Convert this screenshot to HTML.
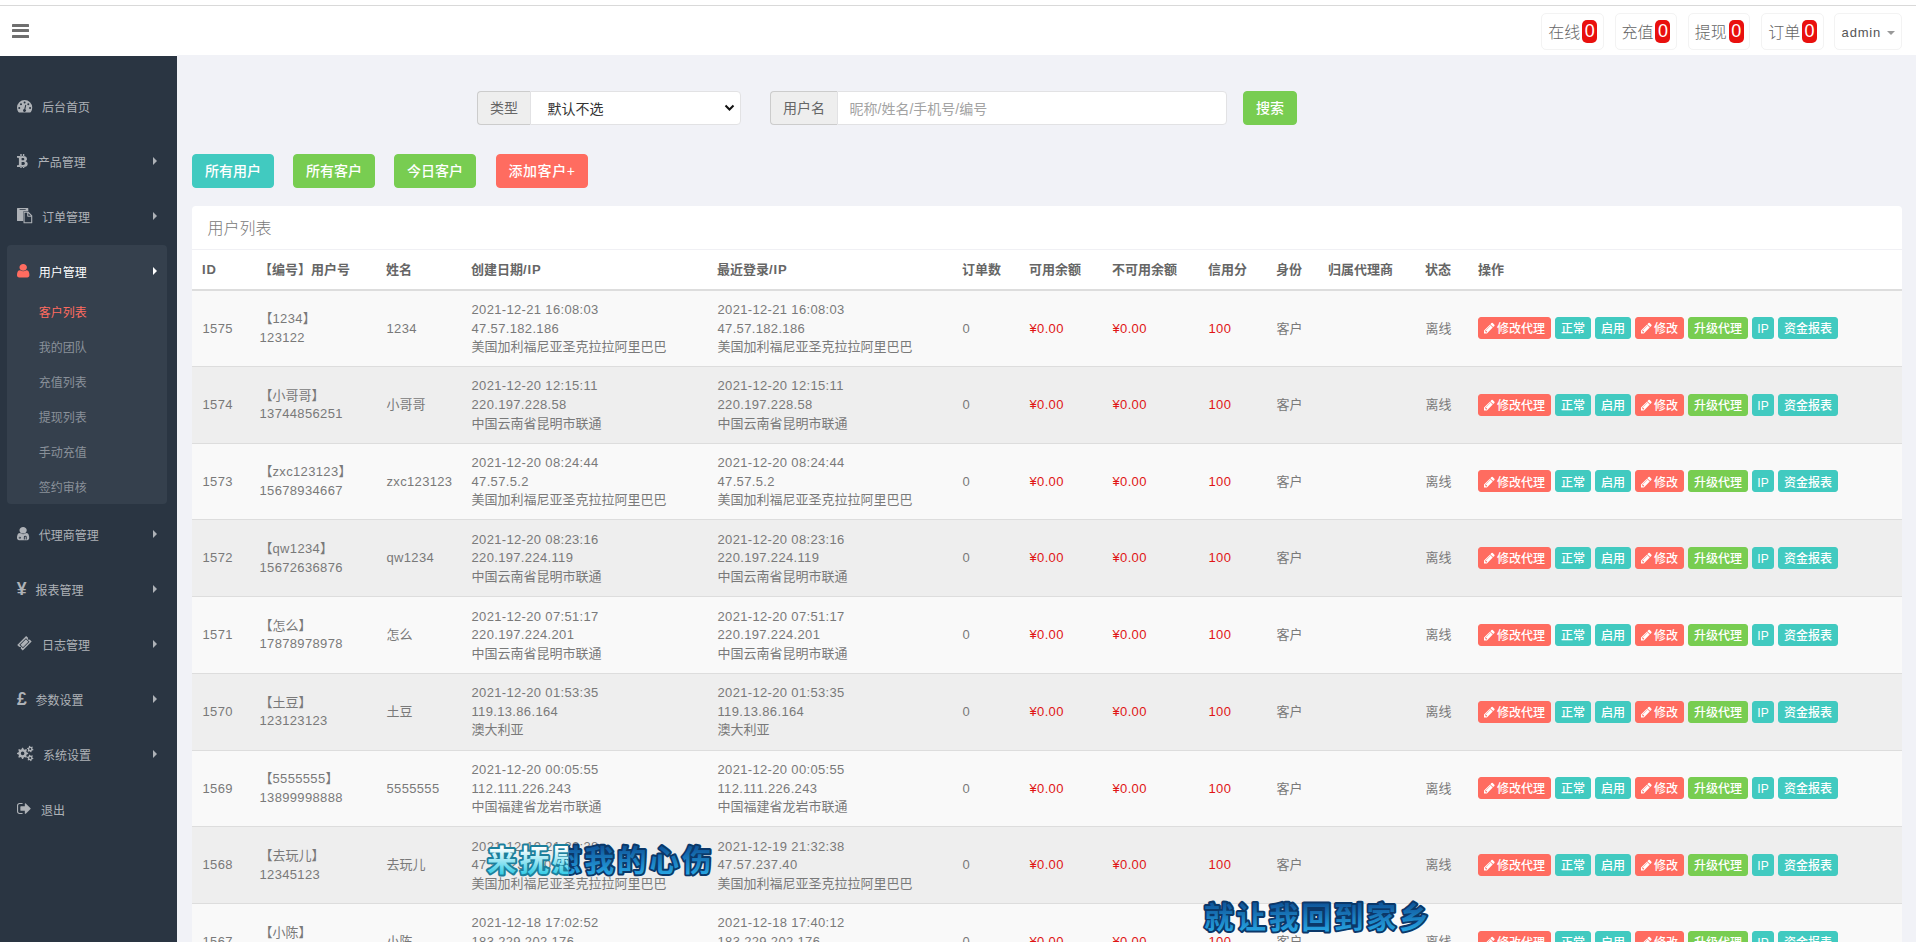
<!DOCTYPE html>
<html lang="zh-CN">
<head>
<meta charset="utf-8">
<title>用户列表</title>
<style>
*{box-sizing:border-box;margin:0;padding:0}
html,body{width:1916px;height:942px;overflow:hidden}
body{font-family:"Liberation Sans","Noto Sans CJK SC",sans-serif;font-size:13px;line-height:1.42857;color:#797979;background:#f1f2f7;position:relative}
ul{list-style:none}
a{text-decoration:none;color:inherit;cursor:pointer}
.topline{position:absolute;left:0;top:0;width:1916px;height:6px;background:#fff;border-bottom:1px solid #d9d9d9}
.header{position:absolute;left:0;top:6px;width:1916px;height:49px;background:#fff}
.burger{position:absolute;left:12px;top:18.3px;width:17.2px;height:15px}
.burger i{display:block;height:2.6px;background:#6f6f6f;margin-bottom:2.5px;border-radius:.6px}
.burger i+i+i{margin-top:3.3px}
.topnav{position:absolute;left:1541.3px;top:7px;display:flex}
.topnav li{margin-right:10.9px;width:62.4px}
.topnav li a{display:flex;align-items:center;height:36.6px;border:1px solid #f3f3f3;border-radius:5px;padding:0 0 0 6px;font-size:16px;color:#666;background:#fff}
.topnav li a .t{font-weight:300;position:relative;top:2.2px;display:inline-block;width:32px}
.bdg{display:inline-block;background:#e9100e;color:#fff;border-radius:5px;font-size:18px;line-height:22.5px;height:22.5px;width:15.1px;text-align:center;margin-left:1.8px;position:relative;top:.4px;font-family:"Liberation Sans",sans-serif}
.topnav li.adm{width:67.6px;margin-right:0}
.topnav li.adm a{font-size:13px;color:#555;padding:0 0 0 6.2px;letter-spacing:.8px}
.username{position:relative;top:2px}
.caret{display:inline-block;width:0;height:0;border-top:4.2px solid #999;border-left:4.2px solid transparent;border-right:4.2px solid transparent;margin-left:6px;margin-top:3.5px}
.sidebar{position:absolute;left:0;top:55px;border-top:1px solid #fff;width:177px;height:887px;background:#2a3542;color:#aeb2b7;font-size:12px}
.menu{padding-top:26.4px}
.menu.m2{padding-top:6px}
.activebox .menu{padding-top:0}
.menu li{height:47.14px;margin:0 10px 7.86px 7px}
.menu li a{display:flex;align-items:center;height:47.14px;padding-left:10px;position:relative;color:#aeb2b7}
.ico{display:inline-block;position:relative;height:15px;margin-right:10px;flex:none}
.ico svg{position:absolute;display:block;overflow:visible}
.lbl{display:inline-block;position:relative;top:2.6px}
.arrow{position:absolute;right:10px;top:19.8px;width:0;height:0;border-left:4px solid #aeb2b7;border-top:4px solid transparent;border-bottom:4px solid transparent}
.arrow.w{border-left-color:#fff}
.activebox{margin:-1.9px 10.4px 0 6.6px;padding-top:1.9px;background:#35404d;border-radius:4px;height:259px}
.activebox .menu li{margin:0}
.activebox .menu li a{color:#fff;padding-left:10.4px}
.sub li{height:35px;line-height:35px;padding-left:32.2px;color:#8a919a;position:relative;top:1.7px}
.sub li.on{color:#ff6c60}
.main{position:absolute;left:177px;top:56px;width:1739px;height:886px}
.search{position:absolute;left:300px;top:35px;height:34px;display:flex}
.ig{display:flex;height:34px}
.addon{display:flex;align-items:center;padding:0 12px;background:#eee;border:1px solid #ccc;border-right:0;border-radius:4px 0 0 4px;color:#666;font-size:14px}
.addon span,.sel span,.inp span{position:relative;top:1.2px}
.ig1{width:263.5px}
.ig2{width:457.4px;margin-left:29.5px}
.sel{flex:1;display:flex;align-items:center;padding-left:16.4px;color:#333;font-size:14px;position:relative;background:#fff;border:1px solid #e2e2e4;border-radius:0 4px 4px 0}
.sel span{top:1.8px}
.chev{position:absolute;right:4.6px;top:11.6px}
.inp{flex:1;display:flex;align-items:center;padding-left:11.6px;color:#a3a3a3;font-size:14px;background:#fff;border:1px solid #e2e2e4;border-radius:0 4px 4px 0}
.inp span{top:1.6px}
.btn{font-weight:500;display:inline-block;height:34px;line-height:32px;padding:0 12px;font-size:14px;color:#fff;border-radius:4px;border:1px solid transparent}
.btn.info,.xs.info{background:#41cac0;border-color:#41cac0}
.btn.success,.xs.success{background:#78cd51;border-color:#78cd51}
.btn.danger,.xs.danger{background:#ff6c60;border-color:#ff6c60}
.sbtn{margin-left:15.6px}
.btnrow{position:absolute;left:15px;top:98px;height:34px;white-space:nowrap}
.btnrow .btn{position:absolute;top:0;width:82px;text-align:center;padding:0}
.btnrow .b1{left:0}.btnrow .b2{left:101px}.btnrow .b3{left:202px}.btnrow .b4{left:304px;width:92px;letter-spacing:.6px}
.panel{position:absolute;left:15px;top:150px;width:1710px;background:#fff;border-radius:4px}
.phead{font-weight:300;height:44px;padding:12px 15px 8px 15.5px;font-size:16px;color:#797979;border-bottom:1px solid #f0f0f4;line-height:22.86px}
.tbl{width:1710px;border-collapse:separate;border-spacing:0;table-layout:fixed}
.tbl th{text-align:left;height:41px;padding:10.3px 10px 8.7px;font-weight:bold;color:#666;border-bottom:2px solid #ddd;vertical-align:middle;white-space:nowrap;line-height:18.57px}
.tbl td{height:76.714px;padding:10.4px 10px 9.6px 10.5px;border-top:1px solid #ddd;vertical-align:middle;color:#797979;white-space:nowrap;line-height:18.571px}
.tbl tbody tr:first-child td{border-top:0;height:75px;padding-top:9.7px;padding-bottom:8.6px}
.tbl tbody tr:first-child .xs{top:-1px}
.tbl tbody tr:nth-child(odd) td{background:#f9f9f9}
.tbl tbody tr:nth-child(even) td{background:#eee}
.tbl td.red{color:#e01515}
.n{letter-spacing:.34px}
.tbl th .n{letter-spacing:.9px}
.bk{margin-left:0}
.xs{font-weight:500;display:inline-block;position:relative;top:-.5px;height:22px;line-height:18px;padding:2.1px 5px 0;word-spacing:0;font-size:12px;color:#fff;border-radius:3px;border:1px solid transparent;vertical-align:middle}
.xs svg{display:inline-block;vertical-align:-1px;margin-right:2px}
.tbl td.ops{font-size:0;padding-left:10px}
.xs{margin-right:4px;text-align:center;padding-left:0!important;padding-right:0!important}
.w73{width:73px}.w36{width:36px}.w49{width:49px}.w60{width:60px}.w22{width:22px}
.lyric{position:absolute;display:block;overflow:visible}
.tico b{position:absolute;font-family:"Liberation Sans",sans-serif;font-weight:bold;font-size:17.6px;line-height:20px;color:#aeb2b7}

</style>
</head>
<body>
<div class="topline"></div>
<header class="header">
  <div class="burger"><i></i><i></i><i></i></div>
  <ul class="topnav">
    <li><a><span class="t">在线</span><span class="bdg">0</span></a></li>
    <li><a><span class="t">充值</span><span class="bdg">0</span></a></li>
    <li><a><span class="t">提现</span><span class="bdg">0</span></a></li>
    <li><a><span class="t">订单</span><span class="bdg">0</span></a></li>
    <li class="adm"><a><span class="username">admin</span><b class="caret"></b></a></li>
  </ul>
</header>
<aside class="sidebar">
  <ul class="menu">
    <li class=""><a><span class="ico" style="width:15px"><svg style="left:-0.15px;top:1.3px" width="15.25" height="12.4" viewBox="0 0 15.25 12.4" preserveAspectRatio="none" fill="#aeb2b7"><path fill-rule="evenodd" d="M0 7.625A7.625 7.625 0 0 1 15.250 7.625Q15.250 10.300 13.900 12Q13.600 12.400 13.100 12.400H2.150Q1.650 12.400 1.350 12Q0 10.300 0 7.625Z M1.25 8.00a1.0 1.0 0 1 0 2.0 0a1.0 1.0 0 1 0 -2.0 0Z M3.00 4.15a1.0 1.0 0 1 0 2.0 0a1.0 1.0 0 1 0 -2.0 0Z M6.60 2.55a1.0 1.0 0 1 0 2.0 0a1.0 1.0 0 1 0 -2.0 0Z M10.30 4.15a1.0 1.0 0 1 0 2.0 0a1.0 1.0 0 1 0 -2.0 0Z M12.05 8.00a1.0 1.0 0 1 0 2.0 0a1.0 1.0 0 1 0 -2.0 0Z M8.300 4.700L9.250 4.950L8.350 9.150A1.500 1.500 0 1 1 7.300 8.900Z"/></svg></span><span class="lbl">后台首页</span></a></li>
    <li class=""><a><span class="ico" style="width:10.7px"><svg style="left:0px;top:0.6px" width="10.7" height="14" viewBox="0 0 10.7 14" preserveAspectRatio="none" fill="#aeb2b7"><path fill-rule="evenodd" d="M0 2.100H6.300C8.600 2.100 10 3.300 10 5.100C10 6.200 9.400 6.900 8.600 7.300C9.900 7.700 10.700 8.700 10.700 10C10.700 11.900 9.200 12.900 6.900 12.900H0V11.200H1.200C1.700 11.200 1.900 11 1.900 10.500V4.500C1.900 4 1.700 3.800 1.200 3.800H0Z M4.600 4.050V6.350H5.900C6.900 6.350 7.300 5.850 7.300 5.200C7.300 4.550 6.900 4.050 5.900 4.050Z M4.600 8.050V11H6.200C7.400 11 7.900 10.400 7.900 9.525C7.900 8.650 7.400 8.050 6.200 8.050Z M3.300 0H4.700V2.200H3.300Z M5.900 0H7.300V2.200H5.900Z M3.300 12.800H4.700V14H3.300Z M5.900 12.800H7.300V14H5.900Z"/></svg></span><span class="lbl">产品管理</span><span class="arrow"></span></a></li>
    <li class=""><a><span class="ico" style="width:15px"><svg style="left:-0.15px;top:-0.65px" width="15.25" height="15.3" viewBox="0 0 15.25 15.3" preserveAspectRatio="none" fill="#aeb2b7"><path fill-rule="evenodd" d="M0.600 0H10.700Q11.300 0 11.300 0.600V3.300H7.100Q6.100 3.300 6.100 4.300V13H0.600Q0 13 0 12.400V0.600Q0 0 0.600 0Z M2.600 1.150H8.700V1.950H2.600Z M7.100 3.700H11.500L15.250 7.450V14.700Q15.250 15.300 14.650 15.300H7.100Q6.500 15.300 6.500 14.700V4.300Q6.500 3.700 7.100 3.700Z M7.600 4.800V14.200H14.150V8.800H10.900Q10.200 8.800 10.200 8.100V4.800Z M11.300 5.150V7.700H13.850Z"/></svg></span><span class="lbl">订单管理</span><span class="arrow"></span></a></li>
  </ul>
  <div class="activebox">
    <ul class="menu">
      <li class="act"><a><span class="ico" style="width:11.8px"><svg style="left:-0.15px;top:0.55px" width="12.4" height="13.5" viewBox="256 128 1280 1536" preserveAspectRatio="none" fill="#ff6c60"><path d="M1536 1399q0 109-62.500 187t-150.500 78h-854q-88 0-150.500-78t-62.500-187q0-85 8.500-160.500t31.500-152 58.500-131 94-89 134.500-34.500q131 128 313 128t313-128q76 0 134.500 34.500t94 89 58.500 131 31.500 152 8.500 160.500zm-256-887q0 159-112.500 271.500t-271.500 112.500-271.500-112.500-112.500-271.500 112.500-271.500 271.500-112.500 271.500 112.500 112.500 271.500z"/></svg></span><span class="lbl">用户管理</span><span class="arrow w"></span></a></li>
    </ul>
    <ul class="sub">
      <li class="on">客户列表</li>
      <li>我的团队</li>
      <li>充值列表</li>
      <li>提现列表</li>
      <li>手动充值</li>
      <li>签约审核</li>
    </ul>
  </div>
  <ul class="menu m2">
    <li class=""><a><span class="ico" style="width:11.8px"><svg style="left:-0.15px;top:0.4px" width="12.2" height="13.2" viewBox="256 128 1280 1536" preserveAspectRatio="none" fill="#aeb2b7"><path fill-rule="evenodd" d="M1536 1399q0 109-62.500 187t-150.500 78h-854q-88 0-150.500-78t-62.500-187q0-85 8.500-160.500t31.500-152 58.500-131 94-89 134.500-34.500q131 128 313 128t313-128q76 0 134.500 34.500t94 89 58.500 131 31.500 152 8.500 160.500zm-256-887q0 159-112.500 271.500t-271.500 112.500-271.500-112.500-112.500-271.500 112.500-271.500 271.500-112.500 271.500 112.500 112.500 271.500z M438 1373 a120 105 0 1 0 240 0 a120 105 0 1 0 -240 0Z M508 1373 a50 44 0 1 0 100 0 a50 44 0 1 0 -100 0Z M975 1571 V1290 a150 150 0 0 1 300 0 V1571 h-100 V1290 a50 50 0 0 0 -100 0 V1571Z"/></svg></span><span class="lbl">代理商管理</span><span class="arrow"></span></a></li>
    <li class=""><a><span class="ico tico" style="width:8.6px"><b style="left:-0.2px;top:-3px">¥</b></span><span class="lbl">报表管理</span><span class="arrow"></span></a></li>
    <li class=""><a><span class="ico" style="width:15px"><svg style="left:0.2px;top:-0.2px" width="14.9" height="14.5" viewBox="0 0 14.9 14.5" preserveAspectRatio="none" fill="#aeb2b7"><g transform="rotate(-45 7.450 7.250)"><path fill-rule="evenodd" d="M1.150 3.350H13.750V6.250A1 1 0 0 0 13.750 8.250V11.150H1.150V8.250A1 1 0 0 0 1.150 6.250Z M2.750 4.750V9.750H12.150V4.750Z M3.550 5.550H11.350V8.950H3.550Z"/></g></svg></span><span class="lbl">日志管理</span><span class="arrow"></span></a></li>
    <li class=""><a><span class="ico tico" style="width:8.6px"><b style="left:-0.1px;top:-2.9px">£</b></span><span class="lbl">参数设置</span><span class="arrow"></span></a></li>
    <li class=""><a><span class="ico" style="width:16px"><svg style="left:-0.15px;top:-0.4px" width="16.5" height="15" viewBox="0 0 16.5 15" preserveAspectRatio="none" fill="#aeb2b7"><path fill-rule="evenodd" d="M11.18 6.92 L11.18 7.88 L9.63 8.57 L9.28 9.42 L9.89 11.00 L9.20 11.69 L7.62 11.08 L6.77 11.43 L6.08 12.98 L5.12 12.98 L4.43 11.43 L3.58 11.08 L2.00 11.69 L1.31 11.00 L1.92 9.42 L1.57 8.57 L0.02 7.88 L0.02 6.92 L1.57 6.23 L1.92 5.38 L1.31 3.80 L2.00 3.11 L3.58 3.72 L4.43 3.37 L5.12 1.82 L6.08 1.82 L6.77 3.37 L7.62 3.72 L9.20 3.11 L9.89 3.80 L9.28 5.38 L9.63 6.23Z M3.80 7.40a1.8 1.8 0 1 0 3.6 0a1.8 1.8 0 1 0 -3.6 0Z M16.47 3.58 L16.27 4.31 L15.05 4.47 L14.57 4.94 L14.42 6.17 L13.69 6.36 L12.94 5.39 L12.29 5.21 L11.15 5.69 L10.62 5.15 L11.09 4.02 L10.92 3.37 L9.93 2.62 L10.13 1.89 L11.35 1.73 L11.83 1.26 L11.98 0.03 L12.71 -0.16 L13.46 0.81 L14.11 0.99 L15.25 0.51 L15.78 1.05 L15.31 2.18 L15.48 2.83Z M12.20 3.10a1.0 1.0 0 1 0 2.0 0a1.0 1.0 0 1 0 -2.0 0Z M16.47 12.38 L16.27 13.11 L15.05 13.27 L14.57 13.74 L14.42 14.97 L13.69 15.16 L12.94 14.19 L12.29 14.01 L11.15 14.49 L10.62 13.95 L11.09 12.82 L10.92 12.17 L9.93 11.42 L10.13 10.69 L11.35 10.53 L11.83 10.06 L11.98 8.83 L12.71 8.64 L13.46 9.61 L14.11 9.79 L15.25 9.31 L15.78 9.85 L15.31 10.98 L15.48 11.63Z M12.20 11.90a1.0 1.0 0 1 0 2.0 0a1.0 1.0 0 1 0 -2.0 0Z"/></svg></span><span class="lbl">系统设置</span><span class="arrow"></span></a></li>
    <li class=""><a><span class="ico" style="width:13.9px"><svg style="left:-0.15px;top:1.55px" width="13.7" height="11.1" viewBox="64 256 1568 1280" preserveAspectRatio="none" fill="#aeb2b7"><path d="M704 1440q0 4 1 20t.5 26.500-3 23.500-10 19.500-20.500 6.500h-320q-119 0-203.500-84.500t-84.500-203.500v-704q0-119 84.500-203.500t203.500-84.500h320q13 0 22.500 9.500t9.500 22.500q0 4 1 20t.5 26.500-3 23.500-10 19.500-20.500 6.500h-320q-66 0-113 47t-47 113v704q0 66 47 113t113 47h312l11.500 1 11.500 3 8 5.500 7 9 2 13.500zm928-544q0 26-19 45l-544 544q-19 19-45 19t-45-19-19-45v-288h-448q-26 0-45-19t-19-45v-384q0-26 19-45t45-19h448v-288q0-26 19-45t45-19 45 19l544 544q19 19 19 45z"/></svg></span><span class="lbl">退出</span></a></li>
  </ul>
</aside>
<section class="main">
  <div class="search">
    <div class="ig ig1"><span class="addon"><span>类型</span></span><span class="sel"><span>默认不选</span><svg class="chev" width="11" height="8" viewBox="0 0 11 8"><path d="M1.500 1.500 L5.500 5.500 L9.500 1.500" fill="none" stroke="#111" stroke-width="2"/></svg></span></div>
    <div class="ig ig2"><span class="addon"><span>用户名</span></span><span class="inp"><span>昵称/姓名/手机号/编号</span></span></div>
    <a class="btn success sbtn">搜索</a>
  </div>
  <div class="btnrow">
    <a class="btn info b1">所有用户</a><a class="btn success b2">所有客户</a><a class="btn success b3">今日客户</a><a class="btn danger b4">添加客户+</a>
  </div>
  <div class="panel">
    <div class="phead">用户列表</div>
    <table class="tbl">
      <colgroup><col style="width:57px"><col style="width:127px"><col style="width:85px"><col style="width:246px"><col style="width:245px"><col style="width:67px"><col style="width:83px"><col style="width:96px"><col style="width:68px"><col style="width:52px"><col style="width:97px"><col style="width:53px"><col></colgroup>
      <thead><tr><th><span class="n">ID</span></th><th>【编号】用户号</th><th>姓名</th><th>创建日期<span class="n">/IP</span></th><th>最近登录<span class="n">/IP</span></th><th>订单数</th><th>可用余额</th><th>不可用余额</th><th>信用分</th><th>身份</th><th>归属代理商</th><th>状态</th><th>操作</th></tr></thead>
      <tbody>
<tr>
<td><span class="n">1575</span></td>
<td>【<span class="n">1234</span>】<br><span class="n">123122</span></td>
<td><span class="n">1234</span></td>
<td><span class="n">2021-12-21 16:08:03</span><br><span class="n">47.57.182.186</span><br>美国加利福尼亚圣克拉拉阿里巴巴</td>
<td><span class="n">2021-12-21 16:08:03</span><br><span class="n">47.57.182.186</span><br>美国加利福尼亚圣克拉拉阿里巴巴</td>
<td><span class="n">0</span></td>
<td class="red"><span class="n">¥0.00</span></td>
<td class="red"><span class="n">¥0.00</span></td>
<td class="red"><span class="n">100</span></td>
<td>客户</td>
<td></td>
<td>离线</td>
<td class="ops"><a class="xs danger w73"><svg width="10.8" height="12" viewBox="128 128 1536 1536" fill="#fff"><path d="M491 1536l91-91-235-235-91 91v107h128v128h107zm523-928q0-22-22-22-10 0-17 7l-542 542q-7 7-7 17 0 22 22 22 10 0 17-7l542-542q7-7 7-17zm-54-192l416 416-832 832h-416v-416zm683 96q0 53-37 90l-166 166-416-416 166-165q36-38 90-38 53 0 91 38l235 234q37 39 37 91z"/></svg>修改代理</a><a class="xs info w36">正常</a><a class="xs info w36">启用</a><a class="xs danger w49"><svg width="10.8" height="12" viewBox="128 128 1536 1536" fill="#fff"><path d="M491 1536l91-91-235-235-91 91v107h128v128h107zm523-928q0-22-22-22-10 0-17 7l-542 542q-7 7-7 17 0 22 22 22 10 0 17-7l542-542q7-7 7-17zm-54-192l416 416-832 832h-416v-416zm683 96q0 53-37 90l-166 166-416-416 166-165q36-38 90-38 53 0 91 38l235 234q37 39 37 91z"/></svg>修改</a><a class="xs success w60">升级代理</a><a class="xs info w22">IP</a><a class="xs info w60">资金报表</a></td>
</tr>
<tr>
<td><span class="n">1574</span></td>
<td>【小哥哥】<br><span class="n">13744856251</span></td>
<td>小哥哥</td>
<td><span class="n">2021-12-20 12:15:11</span><br><span class="n">220.197.228.58</span><br>中国云南省昆明市联通</td>
<td><span class="n">2021-12-20 12:15:11</span><br><span class="n">220.197.228.58</span><br>中国云南省昆明市联通</td>
<td><span class="n">0</span></td>
<td class="red"><span class="n">¥0.00</span></td>
<td class="red"><span class="n">¥0.00</span></td>
<td class="red"><span class="n">100</span></td>
<td>客户</td>
<td></td>
<td>离线</td>
<td class="ops"><a class="xs danger w73"><svg width="10.8" height="12" viewBox="128 128 1536 1536" fill="#fff"><path d="M491 1536l91-91-235-235-91 91v107h128v128h107zm523-928q0-22-22-22-10 0-17 7l-542 542q-7 7-7 17 0 22 22 22 10 0 17-7l542-542q7-7 7-17zm-54-192l416 416-832 832h-416v-416zm683 96q0 53-37 90l-166 166-416-416 166-165q36-38 90-38 53 0 91 38l235 234q37 39 37 91z"/></svg>修改代理</a><a class="xs info w36">正常</a><a class="xs info w36">启用</a><a class="xs danger w49"><svg width="10.8" height="12" viewBox="128 128 1536 1536" fill="#fff"><path d="M491 1536l91-91-235-235-91 91v107h128v128h107zm523-928q0-22-22-22-10 0-17 7l-542 542q-7 7-7 17 0 22 22 22 10 0 17-7l542-542q7-7 7-17zm-54-192l416 416-832 832h-416v-416zm683 96q0 53-37 90l-166 166-416-416 166-165q36-38 90-38 53 0 91 38l235 234q37 39 37 91z"/></svg>修改</a><a class="xs success w60">升级代理</a><a class="xs info w22">IP</a><a class="xs info w60">资金报表</a></td>
</tr>
<tr>
<td><span class="n">1573</span></td>
<td>【<span class="n">zxc123123</span>】<br><span class="n">15678934667</span></td>
<td><span class="n">zxc123123</span></td>
<td><span class="n">2021-12-20 08:24:44</span><br><span class="n">47.57.5.2</span><br>美国加利福尼亚圣克拉拉阿里巴巴</td>
<td><span class="n">2021-12-20 08:24:44</span><br><span class="n">47.57.5.2</span><br>美国加利福尼亚圣克拉拉阿里巴巴</td>
<td><span class="n">0</span></td>
<td class="red"><span class="n">¥0.00</span></td>
<td class="red"><span class="n">¥0.00</span></td>
<td class="red"><span class="n">100</span></td>
<td>客户</td>
<td></td>
<td>离线</td>
<td class="ops"><a class="xs danger w73"><svg width="10.8" height="12" viewBox="128 128 1536 1536" fill="#fff"><path d="M491 1536l91-91-235-235-91 91v107h128v128h107zm523-928q0-22-22-22-10 0-17 7l-542 542q-7 7-7 17 0 22 22 22 10 0 17-7l542-542q7-7 7-17zm-54-192l416 416-832 832h-416v-416zm683 96q0 53-37 90l-166 166-416-416 166-165q36-38 90-38 53 0 91 38l235 234q37 39 37 91z"/></svg>修改代理</a><a class="xs info w36">正常</a><a class="xs info w36">启用</a><a class="xs danger w49"><svg width="10.8" height="12" viewBox="128 128 1536 1536" fill="#fff"><path d="M491 1536l91-91-235-235-91 91v107h128v128h107zm523-928q0-22-22-22-10 0-17 7l-542 542q-7 7-7 17 0 22 22 22 10 0 17-7l542-542q7-7 7-17zm-54-192l416 416-832 832h-416v-416zm683 96q0 53-37 90l-166 166-416-416 166-165q36-38 90-38 53 0 91 38l235 234q37 39 37 91z"/></svg>修改</a><a class="xs success w60">升级代理</a><a class="xs info w22">IP</a><a class="xs info w60">资金报表</a></td>
</tr>
<tr>
<td><span class="n">1572</span></td>
<td>【<span class="n">qw1234</span>】<br><span class="n">15672636876</span></td>
<td><span class="n">qw1234</span></td>
<td><span class="n">2021-12-20 08:23:16</span><br><span class="n">220.197.224.119</span><br>中国云南省昆明市联通</td>
<td><span class="n">2021-12-20 08:23:16</span><br><span class="n">220.197.224.119</span><br>中国云南省昆明市联通</td>
<td><span class="n">0</span></td>
<td class="red"><span class="n">¥0.00</span></td>
<td class="red"><span class="n">¥0.00</span></td>
<td class="red"><span class="n">100</span></td>
<td>客户</td>
<td></td>
<td>离线</td>
<td class="ops"><a class="xs danger w73"><svg width="10.8" height="12" viewBox="128 128 1536 1536" fill="#fff"><path d="M491 1536l91-91-235-235-91 91v107h128v128h107zm523-928q0-22-22-22-10 0-17 7l-542 542q-7 7-7 17 0 22 22 22 10 0 17-7l542-542q7-7 7-17zm-54-192l416 416-832 832h-416v-416zm683 96q0 53-37 90l-166 166-416-416 166-165q36-38 90-38 53 0 91 38l235 234q37 39 37 91z"/></svg>修改代理</a><a class="xs info w36">正常</a><a class="xs info w36">启用</a><a class="xs danger w49"><svg width="10.8" height="12" viewBox="128 128 1536 1536" fill="#fff"><path d="M491 1536l91-91-235-235-91 91v107h128v128h107zm523-928q0-22-22-22-10 0-17 7l-542 542q-7 7-7 17 0 22 22 22 10 0 17-7l542-542q7-7 7-17zm-54-192l416 416-832 832h-416v-416zm683 96q0 53-37 90l-166 166-416-416 166-165q36-38 90-38 53 0 91 38l235 234q37 39 37 91z"/></svg>修改</a><a class="xs success w60">升级代理</a><a class="xs info w22">IP</a><a class="xs info w60">资金报表</a></td>
</tr>
<tr>
<td><span class="n">1571</span></td>
<td>【怎么】<br><span class="n">17878978978</span></td>
<td>怎么</td>
<td><span class="n">2021-12-20 07:51:17</span><br><span class="n">220.197.224.201</span><br>中国云南省昆明市联通</td>
<td><span class="n">2021-12-20 07:51:17</span><br><span class="n">220.197.224.201</span><br>中国云南省昆明市联通</td>
<td><span class="n">0</span></td>
<td class="red"><span class="n">¥0.00</span></td>
<td class="red"><span class="n">¥0.00</span></td>
<td class="red"><span class="n">100</span></td>
<td>客户</td>
<td></td>
<td>离线</td>
<td class="ops"><a class="xs danger w73"><svg width="10.8" height="12" viewBox="128 128 1536 1536" fill="#fff"><path d="M491 1536l91-91-235-235-91 91v107h128v128h107zm523-928q0-22-22-22-10 0-17 7l-542 542q-7 7-7 17 0 22 22 22 10 0 17-7l542-542q7-7 7-17zm-54-192l416 416-832 832h-416v-416zm683 96q0 53-37 90l-166 166-416-416 166-165q36-38 90-38 53 0 91 38l235 234q37 39 37 91z"/></svg>修改代理</a><a class="xs info w36">正常</a><a class="xs info w36">启用</a><a class="xs danger w49"><svg width="10.8" height="12" viewBox="128 128 1536 1536" fill="#fff"><path d="M491 1536l91-91-235-235-91 91v107h128v128h107zm523-928q0-22-22-22-10 0-17 7l-542 542q-7 7-7 17 0 22 22 22 10 0 17-7l542-542q7-7 7-17zm-54-192l416 416-832 832h-416v-416zm683 96q0 53-37 90l-166 166-416-416 166-165q36-38 90-38 53 0 91 38l235 234q37 39 37 91z"/></svg>修改</a><a class="xs success w60">升级代理</a><a class="xs info w22">IP</a><a class="xs info w60">资金报表</a></td>
</tr>
<tr>
<td><span class="n">1570</span></td>
<td>【土豆】<br><span class="n">123123123</span></td>
<td>土豆</td>
<td><span class="n">2021-12-20 01:53:35</span><br><span class="n">119.13.86.164</span><br>澳大利亚</td>
<td><span class="n">2021-12-20 01:53:35</span><br><span class="n">119.13.86.164</span><br>澳大利亚</td>
<td><span class="n">0</span></td>
<td class="red"><span class="n">¥0.00</span></td>
<td class="red"><span class="n">¥0.00</span></td>
<td class="red"><span class="n">100</span></td>
<td>客户</td>
<td></td>
<td>离线</td>
<td class="ops"><a class="xs danger w73"><svg width="10.8" height="12" viewBox="128 128 1536 1536" fill="#fff"><path d="M491 1536l91-91-235-235-91 91v107h128v128h107zm523-928q0-22-22-22-10 0-17 7l-542 542q-7 7-7 17 0 22 22 22 10 0 17-7l542-542q7-7 7-17zm-54-192l416 416-832 832h-416v-416zm683 96q0 53-37 90l-166 166-416-416 166-165q36-38 90-38 53 0 91 38l235 234q37 39 37 91z"/></svg>修改代理</a><a class="xs info w36">正常</a><a class="xs info w36">启用</a><a class="xs danger w49"><svg width="10.8" height="12" viewBox="128 128 1536 1536" fill="#fff"><path d="M491 1536l91-91-235-235-91 91v107h128v128h107zm523-928q0-22-22-22-10 0-17 7l-542 542q-7 7-7 17 0 22 22 22 10 0 17-7l542-542q7-7 7-17zm-54-192l416 416-832 832h-416v-416zm683 96q0 53-37 90l-166 166-416-416 166-165q36-38 90-38 53 0 91 38l235 234q37 39 37 91z"/></svg>修改</a><a class="xs success w60">升级代理</a><a class="xs info w22">IP</a><a class="xs info w60">资金报表</a></td>
</tr>
<tr>
<td><span class="n">1569</span></td>
<td>【<span class="n">5555555</span>】<br><span class="n">13899998888</span></td>
<td><span class="n">5555555</span></td>
<td><span class="n">2021-12-20 00:05:55</span><br><span class="n">112.111.226.243</span><br>中国福建省龙岩市联通</td>
<td><span class="n">2021-12-20 00:05:55</span><br><span class="n">112.111.226.243</span><br>中国福建省龙岩市联通</td>
<td><span class="n">0</span></td>
<td class="red"><span class="n">¥0.00</span></td>
<td class="red"><span class="n">¥0.00</span></td>
<td class="red"><span class="n">100</span></td>
<td>客户</td>
<td></td>
<td>离线</td>
<td class="ops"><a class="xs danger w73"><svg width="10.8" height="12" viewBox="128 128 1536 1536" fill="#fff"><path d="M491 1536l91-91-235-235-91 91v107h128v128h107zm523-928q0-22-22-22-10 0-17 7l-542 542q-7 7-7 17 0 22 22 22 10 0 17-7l542-542q7-7 7-17zm-54-192l416 416-832 832h-416v-416zm683 96q0 53-37 90l-166 166-416-416 166-165q36-38 90-38 53 0 91 38l235 234q37 39 37 91z"/></svg>修改代理</a><a class="xs info w36">正常</a><a class="xs info w36">启用</a><a class="xs danger w49"><svg width="10.8" height="12" viewBox="128 128 1536 1536" fill="#fff"><path d="M491 1536l91-91-235-235-91 91v107h128v128h107zm523-928q0-22-22-22-10 0-17 7l-542 542q-7 7-7 17 0 22 22 22 10 0 17-7l542-542q7-7 7-17zm-54-192l416 416-832 832h-416v-416zm683 96q0 53-37 90l-166 166-416-416 166-165q36-38 90-38 53 0 91 38l235 234q37 39 37 91z"/></svg>修改</a><a class="xs success w60">升级代理</a><a class="xs info w22">IP</a><a class="xs info w60">资金报表</a></td>
</tr>
<tr>
<td><span class="n">1568</span></td>
<td>【去玩儿】<br><span class="n">12345123</span></td>
<td>去玩儿</td>
<td><span class="n">2021-12-19 21:32:38</span><br><span class="n">47.57.237.40</span><br>美国加利福尼亚圣克拉拉阿里巴巴</td>
<td><span class="n">2021-12-19 21:32:38</span><br><span class="n">47.57.237.40</span><br>美国加利福尼亚圣克拉拉阿里巴巴</td>
<td><span class="n">0</span></td>
<td class="red"><span class="n">¥0.00</span></td>
<td class="red"><span class="n">¥0.00</span></td>
<td class="red"><span class="n">100</span></td>
<td>客户</td>
<td></td>
<td>离线</td>
<td class="ops"><a class="xs danger w73"><svg width="10.8" height="12" viewBox="128 128 1536 1536" fill="#fff"><path d="M491 1536l91-91-235-235-91 91v107h128v128h107zm523-928q0-22-22-22-10 0-17 7l-542 542q-7 7-7 17 0 22 22 22 10 0 17-7l542-542q7-7 7-17zm-54-192l416 416-832 832h-416v-416zm683 96q0 53-37 90l-166 166-416-416 166-165q36-38 90-38 53 0 91 38l235 234q37 39 37 91z"/></svg>修改代理</a><a class="xs info w36">正常</a><a class="xs info w36">启用</a><a class="xs danger w49"><svg width="10.8" height="12" viewBox="128 128 1536 1536" fill="#fff"><path d="M491 1536l91-91-235-235-91 91v107h128v128h107zm523-928q0-22-22-22-10 0-17 7l-542 542q-7 7-7 17 0 22 22 22 10 0 17-7l542-542q7-7 7-17zm-54-192l416 416-832 832h-416v-416zm683 96q0 53-37 90l-166 166-416-416 166-165q36-38 90-38 53 0 91 38l235 234q37 39 37 91z"/></svg>修改</a><a class="xs success w60">升级代理</a><a class="xs info w22">IP</a><a class="xs info w60">资金报表</a></td>
</tr>
<tr>
<td><span class="n">1567</span></td>
<td>【小陈】<br><span class="n">13577778888</span></td>
<td>小陈</td>
<td><span class="n">2021-12-18 17:02:52</span><br><span class="n">183.229.202.176</span><br>中国重庆市移动</td>
<td><span class="n">2021-12-18 17:40:12</span><br><span class="n">183.229.202.176</span><br>中国重庆市移动</td>
<td><span class="n">0</span></td>
<td class="red"><span class="n">¥0.00</span></td>
<td class="red"><span class="n">¥0.00</span></td>
<td class="red"><span class="n">100</span></td>
<td>客户</td>
<td></td>
<td>离线</td>
<td class="ops"><a class="xs danger w73"><svg width="10.8" height="12" viewBox="128 128 1536 1536" fill="#fff"><path d="M491 1536l91-91-235-235-91 91v107h128v128h107zm523-928q0-22-22-22-10 0-17 7l-542 542q-7 7-7 17 0 22 22 22 10 0 17-7l542-542q7-7 7-17zm-54-192l416 416-832 832h-416v-416zm683 96q0 53-37 90l-166 166-416-416 166-165q36-38 90-38 53 0 91 38l235 234q37 39 37 91z"/></svg>修改代理</a><a class="xs info w36">正常</a><a class="xs info w36">启用</a><a class="xs danger w49"><svg width="10.8" height="12" viewBox="128 128 1536 1536" fill="#fff"><path d="M491 1536l91-91-235-235-91 91v107h128v128h107zm523-928q0-22-22-22-10 0-17 7l-542 542q-7 7-7 17 0 22 22 22 10 0 17-7l542-542q7-7 7-17zm-54-192l416 416-832 832h-416v-416zm683 96q0 53-37 90l-166 166-416-416 166-165q36-38 90-38 53 0 91 38l235 234q37 39 37 91z"/></svg>修改</a><a class="xs success w60">升级代理</a><a class="xs info w22">IP</a><a class="xs info w60">资金报表</a></td>
</tr>
      </tbody>
    </table>
  </div>
</section>
<svg class="lyric" style="left:470.6px;top:829.4px" width="260" height="60" viewBox="0 0 260 60">
<defs>
<linearGradient id="gu" gradientUnits="userSpaceOnUse" x1="0" y1="14" x2="0" y2="46"><stop offset="0" stop-color="#0c4c92"/><stop offset="1" stop-color="#27a6e4"/></linearGradient>
<linearGradient id="gs" gradientUnits="userSpaceOnUse" x1="0" y1="14" x2="0" y2="46"><stop offset="0.15" stop-color="#ffffff"/><stop offset="1" stop-color="#2fcbe6"/></linearGradient>
<pattern id="pf" patternUnits="userSpaceOnUse" x="0" y="0" width="260" height="60"><rect x="0" y="0" width="97.500" height="60" fill="url(#gs)"/><rect x="97.500" y="0" width="163" height="60" fill="url(#gu)"/></pattern>
<pattern id="ps" patternUnits="userSpaceOnUse" x="0" y="0" width="260" height="60"><rect x="0" y="0" width="97.500" height="60" fill="#1d7f9c"/><rect x="97.500" y="0" width="163" height="60" fill="#0b3869"/></pattern>
</defs>
<text x="16" y="42" font-family="'Liberation Sans','Noto Sans CJK SC',sans-serif" font-weight="700" font-size="29.600" letter-spacing="2.900" fill="url(#pf)" stroke="url(#ps)" stroke-width="3.800" stroke-linejoin="round" paint-order="stroke">来抚慰我的心伤</text>
</svg>
<svg class="lyric" style="left:1187.6px;top:885.8px" width="260" height="56" viewBox="0 0 260 56">
<text x="16" y="42" font-family="'Liberation Sans','Noto Sans CJK SC',sans-serif" font-weight="700" font-size="29.600" letter-spacing="2.900" fill="url(#gu2)" stroke="#0b3869" stroke-width="3.800" stroke-linejoin="round" paint-order="stroke">就让我回到家乡</text>
<defs><linearGradient id="gu2" gradientUnits="userSpaceOnUse" x1="0" y1="14" x2="0" y2="46"><stop offset="0" stop-color="#0c4c92"/><stop offset="1" stop-color="#27a6e4"/></linearGradient></defs>
</svg>
</body>
</html>
